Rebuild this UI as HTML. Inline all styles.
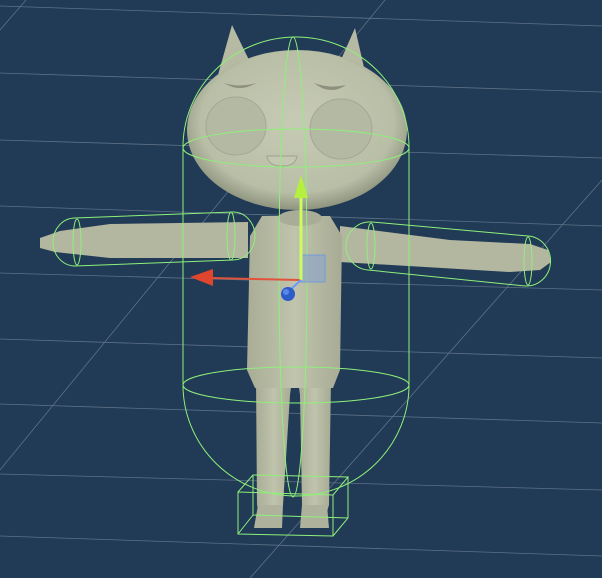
<!DOCTYPE html>
<html><head><meta charset="utf-8"><style>html,body{margin:0;padding:0;background:#213a56;overflow:hidden}svg{display:block}</style></head>
<body>
<svg width="602" height="578" viewBox="0 0 602 578" xmlns="http://www.w3.org/2000/svg">
<defs>
<radialGradient id="hd" cx="0.5" cy="0.45" r="0.55"><stop offset="0" stop-color="#c7cbb5"/><stop offset="0.8" stop-color="#b9bea6"/><stop offset="1" stop-color="#8f947f"/></radialGradient>
<linearGradient id="bd" x1="0" x2="1"><stop offset="0" stop-color="#a9ad96"/><stop offset="0.5" stop-color="#c0c4ad"/><stop offset="1" stop-color="#a7ab94"/></linearGradient>
</defs>
<rect width="602" height="578" fill="#213a56"/>
<g stroke="#6d7f93" stroke-width="0.8" fill="none" opacity="0.8">
<line x1="0" y1="6" x2="602" y2="26"/>
<line x1="0" y1="73" x2="602" y2="92"/>
<line x1="0" y1="140" x2="602" y2="158"/>
<line x1="0" y1="206" x2="602" y2="226"/>
<line x1="0" y1="273" x2="602" y2="290"/>
<line x1="0" y1="339" x2="602" y2="358"/>
<line x1="0" y1="404" x2="602" y2="423"/>
<line x1="0" y1="474" x2="602" y2="490"/>
<line x1="0" y1="536" x2="602" y2="556"/>
<line x1="0" y1="30" x2="26" y2="0"/>
<line x1="0" y1="470" x2="385" y2="0"/>
<line x1="250" y1="578" x2="602" y2="180"/>
</g>
<!-- legs -->
<path d="M256 380 L292 380 L290 395 L283 505 L280 515 L260 515 L257 505 Z" fill="url(#bd)"/>
<path d="M298 380 L331 380 L329 505 L326 515 L305 515 L302 505 L300 395 Z" fill="url(#bd)"/>
<path d="M258 505 L283 505 L282 528 L254 528 Z" fill="#aeb29d"/>
<path d="M302 505 L327 505 L329 528 L300 528 Z" fill="#aeb29d"/>
<!-- arms -->
<path d="M248 222 L110 224 L60 231 L40 238 L40 248 L55 252 L110 258 L248 258 Z" fill="#b3b7a0"/>
<path d="M340 226 L450 240 L530 244 L548 250 L551 262 L540 270 L510 272 L340 262 Z" fill="#b3b7a0"/>
<!-- torso -->
<path d="M262 216 L330 216 L342 236 L340 370 L333 388 L255 388 L247 370 L250 236 Z" fill="url(#bd)"/>
<ellipse cx="300" cy="218" rx="22" ry="8" fill="#a9ad97"/>
<!-- ears -->
<path d="M218 75 L232 25 L250 62 Z" fill="#b6baa3"/>
<path d="M340 62 L355 28 L368 85 Z" fill="#b6baa3"/>
<!-- head -->
<ellipse cx="297" cy="130" rx="110" ry="80" fill="url(#hd)"/>
<ellipse cx="236" cy="126" rx="30" ry="29" fill="#b4b9a3" stroke="#a3a893"/>
<ellipse cx="341" cy="129" rx="31" ry="30" fill="#b4b9a3" stroke="#a3a893"/>
<path d="M224 83 Q240 88 256 83 Q240 93 224 83Z" fill="#8e907d"/>
<path d="M314 83 Q330 89 346 85 Q330 96 314 83Z" fill="#8e907d"/>
<path d="M267 156 L297 156 Q296 166 282 166 Q268 166 267 156Z" fill="#c4c8b3" stroke="#9ea28e"/>
<!-- capsule colliders -->
<g stroke="#8ef07a" stroke-width="1" fill="none">
<path d="M183 147 A113 110 0 0 1 409 147"/>
<line x1="183" y1="147" x2="183" y2="385"/>
<line x1="409" y1="147" x2="409" y2="385"/>
<path d="M183 385 A113 111 0 0 0 409 385"/>
<ellipse cx="296" cy="148" rx="113" ry="19"/>
<ellipse cx="296" cy="385" rx="113" ry="18"/>
<ellipse cx="293" cy="267" rx="14" ry="230"/>
<path d="M75 218 L233 212 M75 266 L233 260"/>
<path d="M75 218 A22 24 0 0 0 75 266"/>
<ellipse cx="77" cy="242" rx="4" ry="23"/>
<path d="M233 212 A22 24 0 0 1 233 260"/>
<ellipse cx="231" cy="236" rx="4" ry="24"/>
<path d="M372 222 L528 236 M368 270 L525 286"/>
<path d="M372 222 A24 24 0 0 0 368 270"/>
<ellipse cx="371" cy="246" rx="4" ry="23"/>
<path d="M528 236 A24 25 0 0 1 525 286"/>
<ellipse cx="528" cy="261" rx="4" ry="24"/>
<path d="M238 492 L333 495 L333 536 L238 534 Z M238 492 L253 475 L348 477 L333 495 M348 477 L348 518 L333 536 M253 475 L253 515 L348 518 M253 515 L238 534"/>
</g>
<!-- gizmo -->
<rect x="300" y="255" width="25" height="27" fill="#8fa7c8" opacity="0.7" stroke="#5c8ef0"/>
<line x1="300" y1="280" x2="210" y2="278" stroke="#e2533b" stroke-width="2"/>
<path d="M190 277 L213 269 L213 286 Z" fill="#e0452e"/>
<line x1="301" y1="280" x2="301" y2="190" stroke="#c8ff5a" stroke-width="3"/>
<path d="M301 175 L294 198 L308 198 Z" fill="#b6f03e"/>
<line x1="301" y1="280" x2="290" y2="290" stroke="#6a9aff" stroke-width="2"/>
<circle cx="288" cy="294" r="7" fill="#2c5cc8"/>
<circle cx="286" cy="292" r="3" fill="#5a88ea"/>
</svg>
</body></html>
